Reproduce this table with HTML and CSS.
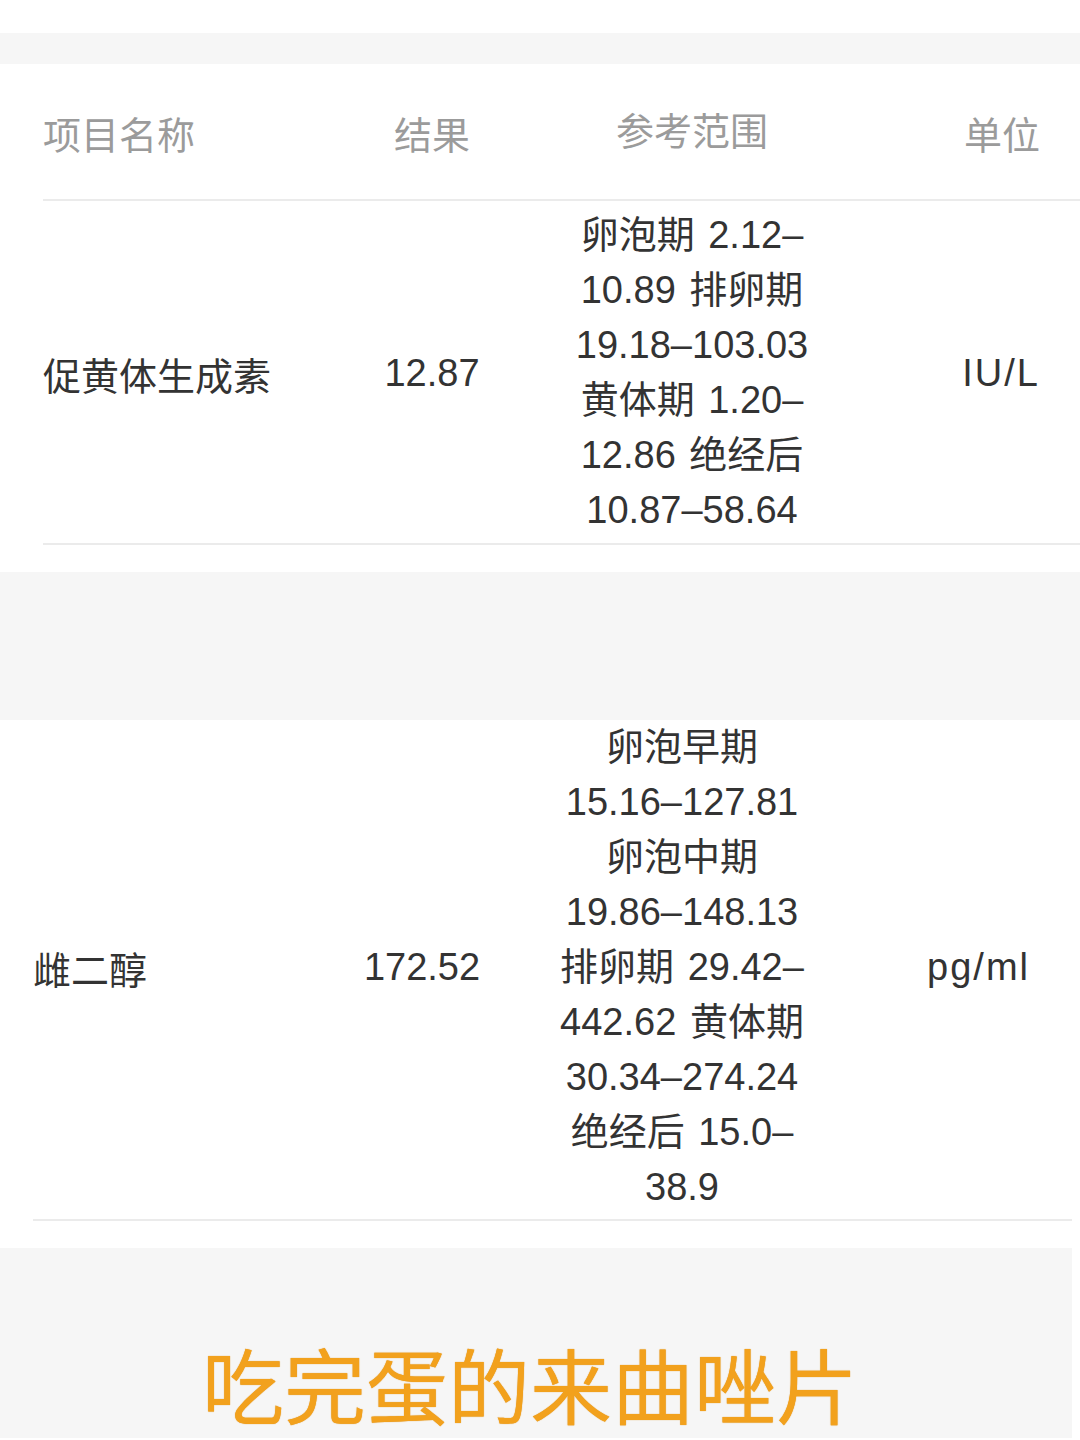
FILE: index.html
```html
<!DOCTYPE html>
<html lang="zh-CN">
<head>
<meta charset="utf-8">
<title>检验报告</title>
<link rel="stylesheet" href="styles.css">
</head>
<body>
<div class="page">
  <div class="band band-top"></div>

  <section class="card card-a">
    <div class="row row-head">
      <div class="cell c-name">项目名称</div>
      <div class="cell c-result">结果</div>
      <div class="cell c-range">参考范围</div>
      <div class="cell c-unit">单位</div>
    </div>
    <div class="row row-item row-a">
      <div class="cell c-name">促黄体生成素</div>
      <div class="cell c-result">12.87</div>
      <div class="cell c-range">卵泡期 2.12–<br>10.89 排卵期<br>19.18–103.03<br>黄体期 1.20–<br>12.86 绝经后<br>10.87–58.64</div>
      <div class="cell c-unit unit-latin">IU/L</div>
    </div>
  </section>

  <div class="band band-mid"></div>

  <section class="card card-b">
    <div class="row row-item row-b">
      <div class="cell c-name">雌二醇</div>
      <div class="cell c-result">172.52</div>
      <div class="cell c-range">卵泡早期<br>15.16–127.81<br>卵泡中期<br>19.86–148.13<br>排卵期 29.42–<br>442.62 黄体期<br>30.34–274.24<br>绝经后 15.0–<br>38.9</div>
      <div class="cell c-unit unit-latin">pg/ml</div>
    </div>
  </section>

  <div class="band band-bottom">
    <p class="caption">吃完蛋的来曲唑片</p>
  </div>
</div>
</body>
</html>
```

FILE: styles.css
```css
html, body {
  margin: 0;
  padding: 0;
  background: #ffffff;
}

.page {
  width: 1080px;
  height: 1440px;
  padding-top: 33px;
  box-sizing: border-box;
  font-family: "Liberation Sans", "Noto Sans CJK SC", sans-serif;
  font-size: 38px;
  color: #333333;
}

.band {
  background: #f6f6f6;
}

.band-top {
  height: 31px;
}

.band-mid {
  height: 148px;
}

.card {
  background: #ffffff;
}

.card-a {
  padding-bottom: 27px;
}

.card-b {
  padding-bottom: 27px;
}

.row {
  display: grid;
  grid-template-columns: 290px 198px 322px 187px;
  align-items: center;
  border-bottom: 2px solid #ebebeb;
}

.card-a .row {
  margin-left: 43px;
  padding-right: 40px;
}

.card-b .row {
  margin-left: 33px;
  margin-right: 8px;
  padding-right: 42px;
}

.row-head {
  height: 137px;
  color: #9b9b9b;
  padding-top: 2px;
  box-sizing: border-box;
}

.row-a {
  padding-top: 7px;
  padding-bottom: 5px;
}

.row-b {
  padding-top: 0;
  padding-bottom: 4px;
}

.cell {
  white-space: nowrap;
}

.c-name {
  text-align: left;
}

.c-result {
  text-align: center;
}

.c-range {
  text-align: center;
  line-height: 55px;
  word-spacing: 3px;
}

.c-unit {
  text-align: right;
}

.unit-latin {
  letter-spacing: 2px;
}

.band-bottom {
  height: 190px;
  margin-right: 8px;
  padding-right: 12px;
  box-sizing: border-box;
}

.caption {
  margin: 0;
  padding-top: 93px;
  text-align: center;
  font-family: "Noto Sans CJK SC", sans-serif;
  font-size: 82px;
  line-height: 84px;
  color: #f2a11d;
  text-shadow: 0 0 1px #d98a10;
}
```
